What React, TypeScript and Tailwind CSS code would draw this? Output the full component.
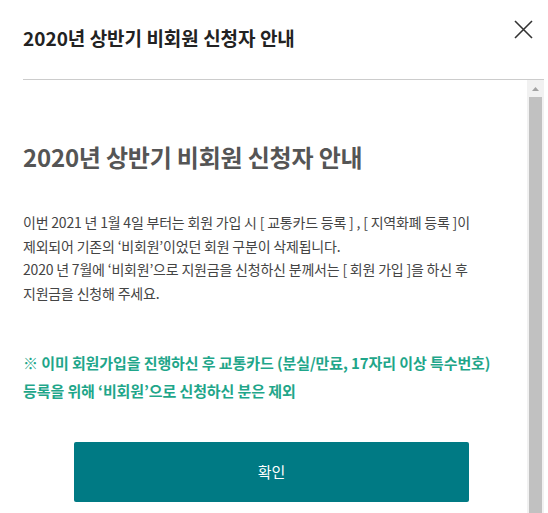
import React from 'react';

const font = { fontFamily: '"Noto Sans CJK KR", "Noto Sans", sans-serif' };

// 스크롤바 (윈도우 스타일 모양)
function FakeScrollbar() {
  return (
    <div className="w-[17px] shrink-0 bg-[#f1f1f1] flex flex-col">
      <div className="h-[17px] flex items-center justify-center">
        <svg width="7" height="4" viewBox="0 0 7 4">
          <path d="M3.5 0 L7 4 L0 4 Z" fill="#a3a3a3" />
        </svg>
      </div>
      <div className="mx-[2px] flex-1 bg-[#c1c1c1]" />
    </div>
  );
}

export default function App() {
  return (
    <div className="w-[548px] h-[513px] overflow-hidden bg-white flex flex-col pl-[23px] pr-[4px]" style={font}>
      {/* 헤더 */}
      <div className="h-[80px] shrink-0 border-b border-[#cccccc] flex items-start justify-between">
        <h2 className="mt-[24px] text-[19px] leading-[28px] font-bold text-[#222]">
          2020년 상반기 비회원 신청자 안내
        </h2>
        <button className="mt-[20px] mr-[11px] w-[19px] h-[19px] flex items-center justify-center">
          <svg width="19" height="19" viewBox="0 0 19 19">
            <path d="M1 1 L18 18 M18 1 L1 18" stroke="#333" strokeWidth="1.6" />
          </svg>
        </button>
      </div>

      {/* 본문 */}
      <div className="flex-1 flex min-h-0">
        <div className="flex-1 overflow-hidden pr-[10px]">
          <h1 className="mt-[61px] text-[24px] leading-[32px] font-bold text-[#555] tracking-[-0.2px]">
            2020년 상반기 비회원 신청자 안내
          </h1>
          <p className="mt-[38px] text-[14px] leading-[23.5px] text-[#444] tracking-[-0.2px]">
            이번 2021 년 1월 4일 부터는 회원 가입 시 [ 교통카드 등록 ] , [ 지역화폐 등록 ]이<br />
            제외되어 기존의 ‘비회원’이었던 회원 구분이 삭제됩니다.<br />
            2020 년 7월에 ‘비회원’으로 지원금을 신청하신 분께서는 [ 회원 가입 ]을 하신 후<br />
            지원금을 신청해 주세요.
          </p>
          <p className="mt-[44px] text-[15px] leading-[28px] font-bold text-[#1fa68a] tracking-[-0.1px] whitespace-nowrap">
            ※ 이미 회원가입을 진행하신 후 교통카드 (분실/만료, 17자리 이상 특수번호)<br />
            등록을 위해 ‘비회원’으로 신청하신 분은 제외
          </p>
          <div className="mt-[37px] pl-[51px] pr-[48px]">
            <button className="w-full h-[60px] rounded-[2px] bg-[#007a84] text-white text-[15px]">
              확인
            </button>
          </div>
        </div>
        <FakeScrollbar />
      </div>
    </div>
  );
}
